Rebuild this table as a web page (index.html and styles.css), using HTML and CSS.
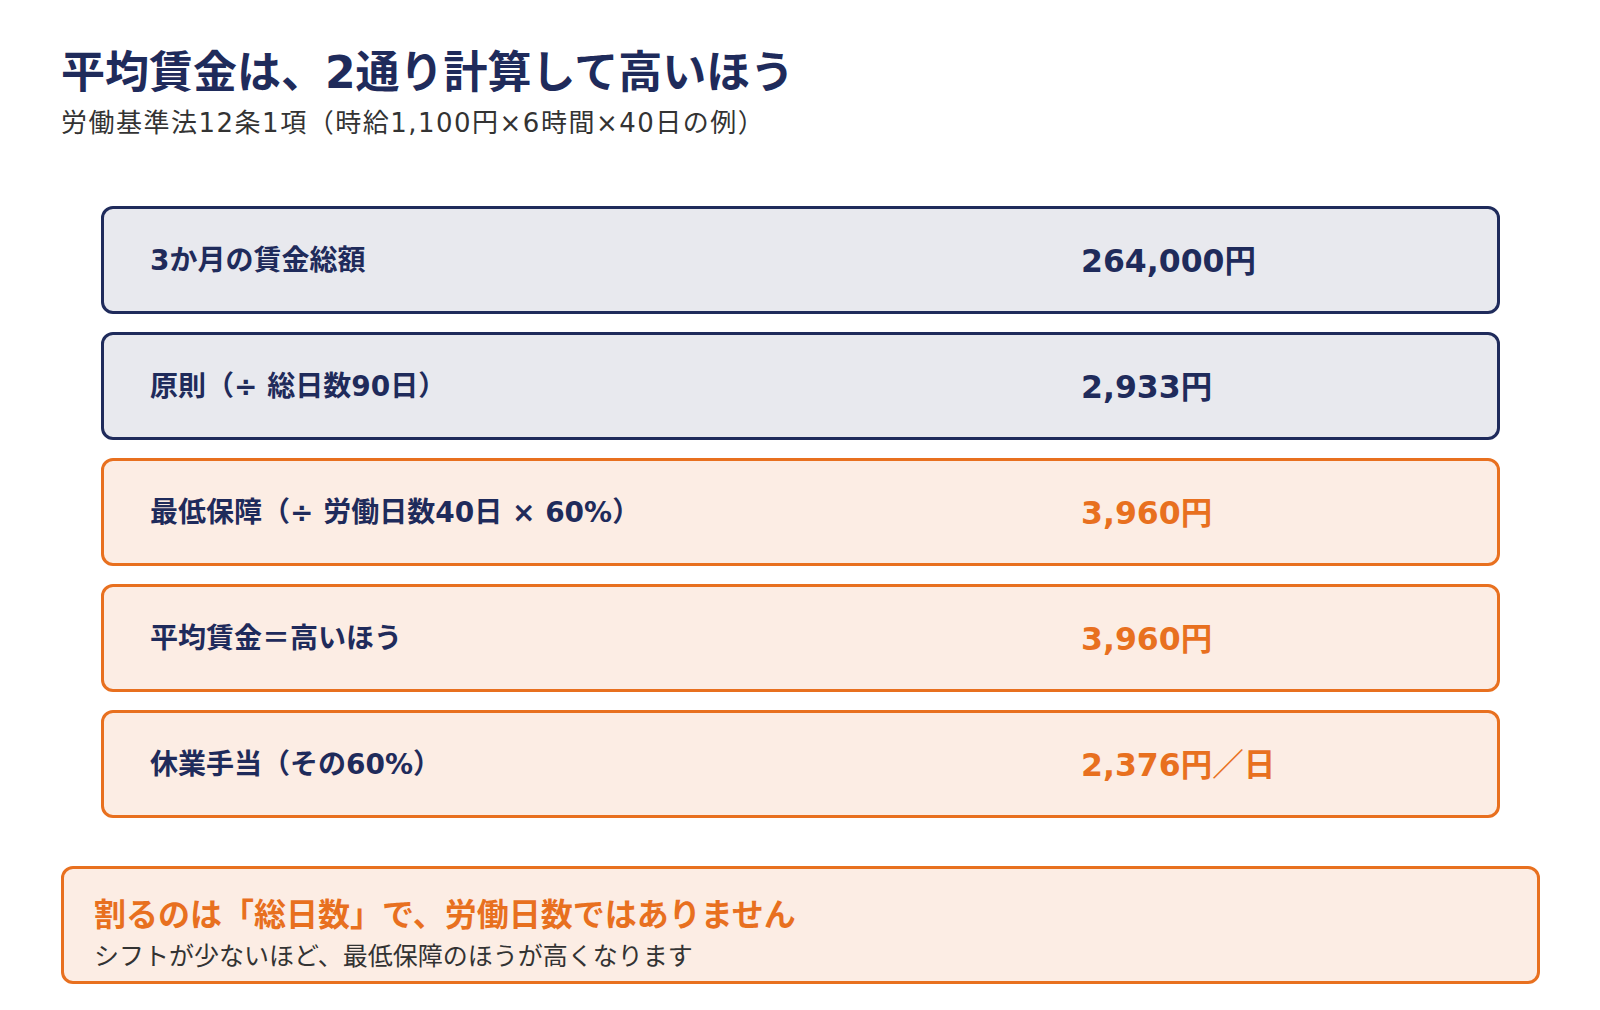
FILE: index.html
```html
<!DOCTYPE html>
<html lang="ja">
<head>
<meta charset="utf-8">
<link rel="stylesheet" href="styles.css">
</head>
<body>
<div class="page">
  <header class="head">
    <h1 class="title">平均賃金は、2通り計算して高いほう</h1>
    <p class="subtitle">労働基準法12条1項（時給1,100円×6時間×40日の例）</p>
  </header>
  <div class="rows">
    <div class="row navy">
      <div class="label">3か月の賃金総額</div>
      <div class="value">264,000円</div>
    </div>
    <div class="row navy">
      <div class="label">原則（÷ 総日数90日）</div>
      <div class="value">2,933円</div>
    </div>
    <div class="row orange">
      <div class="label">最低保障（÷ 労働日数40日 × 60%）</div>
      <div class="value">3,960円</div>
    </div>
    <div class="row orange">
      <div class="label">平均賃金＝高いほう</div>
      <div class="value">3,960円</div>
    </div>
    <div class="row orange">
      <div class="label">休業手当（その60%）</div>
      <div class="value">2,376円／日</div>
    </div>
  </div>
  <div class="note">
    <div class="note-title">割るのは「総日数」で、労働日数ではありません</div>
    <div class="note-text">シフトが少ないほど、最低保障のほうが高くなります</div>
  </div>
</div>
</body>
</html>
```

FILE: styles.css
```css
html, body {
  margin: 0;
  padding: 0;
  background: #ffffff;
}
body {
  font-family: "DejaVu Sans", "Noto Sans CJK JP", sans-serif;
  color: #1f2b5b;
}
.page {
  width: 1600px;
  height: 1010px;
  box-sizing: border-box;
  padding: 42px 60px 0 61px;
}
.head {
  margin: 0;
}
.title {
  margin: 0;
  font-size: 44px;
  line-height: 62px;
  font-weight: 700;
  color: #1f2b5b;
}
.subtitle {
  margin: 2px 0 0 0;
  font-size: 26px;
  line-height: 34px;
  font-weight: 400;
  letter-spacing: 1.5px;
  color: #333333;
}
.rows {
  display: flex;
  flex-direction: column;
  gap: 18px;
  margin: 66px 40px 0 40px;
}
.row {
  display: grid;
  grid-template-columns: 1fr 366px;
  align-items: center;
  height: 108px;
  box-sizing: border-box;
  padding: 0 50px 4px 46px;
  border: 3px solid;
  border-radius: 12px;
}
.row.navy {
  background: #e8e9ee;
  border-color: #1f2b5b;
}
.row.orange {
  background: #fcede4;
  border-color: #e8701f;
}
.label {
  font-size: 28px;
  font-weight: 700;
  color: #1f2b5b;
}
.value {
  font-size: 31.5px;
  font-weight: 700;
}
.navy .value {
  color: #1f2b5b;
}
.orange .value {
  color: #e8701f;
}
.note {
  margin-top: 48px;
  box-sizing: border-box;
  height: 118px;
  border: 3px solid #e8701f;
  border-radius: 12px;
  background: #fcede4;
  padding: 23px 30px 0 30px;
}
.note-title {
  font-size: 32px;
  line-height: 46px;
  font-weight: 700;
  color: #e8701f;
}
.note-text {
  margin-top: 2px;
  font-size: 25px;
  line-height: 34px;
  color: #333333;
}
```
